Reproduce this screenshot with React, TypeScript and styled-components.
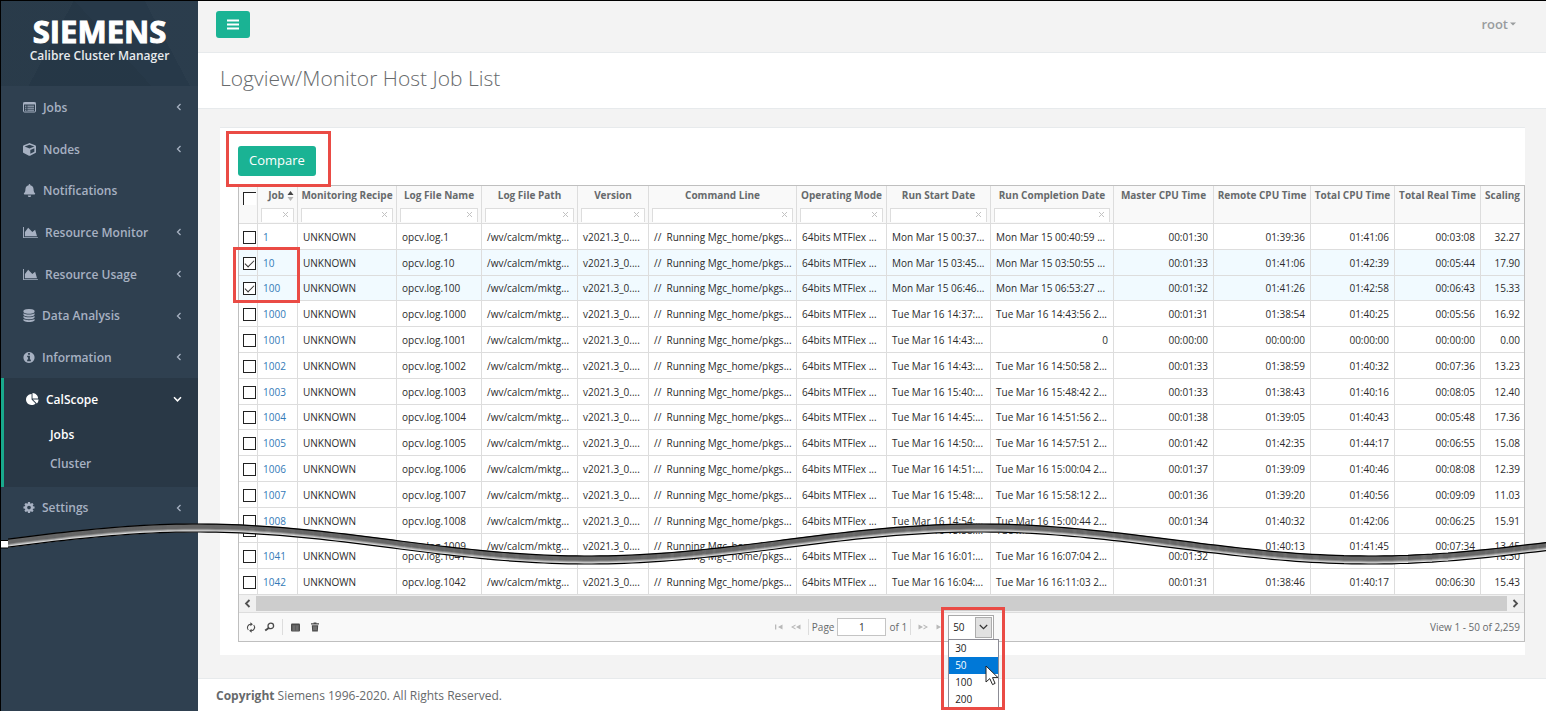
import React from "react";
import styled, { createGlobalStyle, css } from "styled-components";
import { FaBell, FaCube } from "react-icons/fa";

const GlobalStyle = createGlobalStyle`
  *, *::before, *::after { box-sizing: border-box; }
  body {
    margin: 0;
    font-family: "Open Sans", "Noto Sans", sans-serif;
    font-size: 12px;
    color: #676a6c;
    background: #f3f3f4;
  }
  button, input, select { font-family: inherit; }
`;

/* ---------- tear line geometry, shared by the drawing and the clip ---------- */

const VIEW_WIDTH = 1546;
const TEAR_THICKNESS = 8;
const tearY = (x: number) => 540 - 16 * Math.cos(((x - 197) / 391) * Math.PI);

const tearLine = (dy: number) => {
  const points: string[] = [];
  for (let x = 8; x <= VIEW_WIDTH + 8; x += 8) points.push(`${x},${(tearY(x) + dy - 520).toFixed(1)}`);
  return points.join(" ");
};

const lowerClip = () => {
  const left = 239;
  const width = 1285;
  const points: string[] = [];
  for (let i = 0; i <= 80; i++) {
    const x = left + (width * i) / 80;
    points.push(`${((i / 80) * 100).toFixed(2)}% ${(tearY(x) + TEAR_THICKNESS - 517).toFixed(1)}px`);
  }
  return `polygon(${points.join(", ")}, 100% 100%, 0 100%)`;
};

/* ---------- frame ---------- */

const Page = styled.div`
  position: relative;
  display: flex;
  min-height: 100vh;
  border-top: 1px solid #000;
  border-left: 1px solid #000;
  overflow: hidden;
`;

const Sidebar = styled.nav`
  flex: 0 0 197px;
  background: #2f4050;
`;

const Brand = styled.div`
  display: flex;
  flex-direction: column;
  align-items: center;
  height: 85px;
  padding-top: 13px;
  color: #fff;
  background:
    linear-gradient(62deg, transparent 78%, rgba(255, 255, 255, 0.02) 78%),
    linear-gradient(118deg, rgba(255, 255, 255, 0.02) 30%, transparent 30%),
    linear-gradient(48deg, rgba(0, 0, 0, 0.04) 55%, transparent 55%),
    #273949;
`;

const BrandName = styled.span`
  font-size: 31px;
  font-weight: 700;
  line-height: 34px;
  -webkit-text-stroke: 1px #fff;
`;

const BrandProduct = styled.span`
  font-size: 12px;
  font-weight: 600;
  line-height: 16px;
  color: #e8ebee;
`;

const Menu = styled.ul`
  list-style: none;
  margin: 0;
  padding: 0;
`;

const MenuLink = styled.a<{ $active?: boolean }>`
  display: flex;
  align-items: center;
  gap: 7px;
  height: 42px;
  padding: 0 16px 0 22px;
  font-weight: 600;
  color: ${(p) => (p.$active ? "#fff" : "#a7b1c2")};
  text-decoration: none;
  svg { flex: none; }
  svg:last-child { margin-left: auto; }
`;

const MenuItem = styled.li<{ $active?: boolean }>`
  &:nth-child(3n) > ${MenuLink} { height: 41px; }
  ${(p) =>
    p.$active &&
    css`
      background: #293846;
      border-left: 3px solid #19aa8d;
      padding-bottom: 9px;
    `}
`;

const SubLink = styled.a<{ $active?: boolean }>`
  display: block;
  padding-left: 46px;
  font-weight: 600;
  line-height: 29px;
  color: ${(p) => (p.$active ? "#fff" : "#a7b1c2")};
  text-decoration: none;
`;

const Main = styled.div`
  flex: 1;
  min-width: 0;
  display: flex;
  flex-direction: column;
  background: #f3f3f3;
`;

const TopBar = styled.header`
  display: flex;
  align-items: center;
  justify-content: space-between;
  height: 52px;
  padding: 0 30px 4px 18px;
  border-bottom: 1px solid #e7eaec;
`;

const BarsButton = styled.button`
  display: flex;
  align-items: center;
  justify-content: center;
  width: 34px;
  height: 27px;
  padding: 0;
  border: 0;
  border-radius: 3px;
  background: #1ab394;
  color: #fff;
`;

const UserLink = styled.a`
  display: flex;
  align-items: center;
  gap: 2px;
  padding-bottom: 2px;
  font-size: 13px;
  font-weight: 600;
  color: #999c9e;
  text-decoration: none;
`;

const TitleBar = styled.div`
  height: 56px;
  padding: 8px 22px;
  background: #fff;
  border-bottom: 1px solid #e7eaec;
`;

const Title = styled.h1`
  margin: 0;
  font-size: 21px;
  font-weight: 300;
  line-height: 34px;
`;

const Content = styled.main`
  flex: 1;
  padding: 18px 21px 23px 22px;
`;

const Panel = styled.section`
  padding: 18px 0 13px 18px;
  background: #fff;
  border-top: 1px solid #e7eaec;
`;

const PageFooter = styled.footer`
  height: 33px;
  padding-left: 18px;
  line-height: 33px;
  background: #fff;
  border-top: 1px solid #e7eaec;
`;

/* ---------- call-outs ---------- */

const Callout = styled.span<{ $inset: string }>`
  position: absolute;
  inset: ${(p) => p.$inset};
  z-index: 5;
  border: 3px solid #ea4b45;
  pointer-events: none;
`;

const CompareSlot = styled.div`
  position: relative;
  width: fit-content;
  margin-bottom: 9px;
`;

const CompareButton = styled.button`
  display: block;
  height: 30px;
  padding: 0 11px 2px;
  border: 0;
  border-radius: 3px;
  background: #1ab394;
  color: #fff;
  font-size: 13px;
`;

/* ---------- job grid ---------- */

const GridFrame = styled.div`
  border: 1px solid #bfbfbf;
  background: #fff;
`;

const GridTable = styled.table`
  width: 100%;
  table-layout: fixed;
  border-collapse: separate;
  border-spacing: 0;
  background: #fff;
  font-size: 10px;
  line-height: 14px;
`;

/* rows average a little under 26px, so every fifth one is a pixel shorter */
const UpperTable = styled(GridTable)`
  tbody tr:nth-child(5n + 3) td { height: 25px; }
`;

const LowerTable = styled(GridTable)`
  position: relative;
  margin-top: -42px;
  clip-path: ${lowerClip()};
`;

const HeadCell = styled.th`
  height: 38px;
  padding: 2px 3px 0;
  vertical-align: top;
  text-align: center;
  white-space: nowrap;
  font-weight: 700;
  background: #f9f9f9;
  border-right: 1px solid #ddd;
  border-bottom: 1px solid #ddd;
  &:last-child { border-right: 0; }
`;

const HeadLabel = styled.div<{ $sorted?: boolean }>`
  display: flex;
  justify-content: ${(p) => (p.$sorted ? "flex-end" : "center")};
  align-items: center;
  gap: 3px;
  line-height: 15px;
`;

const FilterBox = styled.div`
  display: flex;
  align-items: center;
  height: 14px;
  margin-top: 5px;
  border: 1px solid #ddd;
  border-bottom: 0;
  background: #fff;
`;

const FilterInput = styled.input`
  flex: 1;
  min-width: 0;
  width: 0;
  height: 12px;
  padding: 0 2px;
  border: 0;
  font-size: 10px;
  background: transparent;
`;

const ClearButton = styled.button`
  display: flex;
  padding: 0 5px 2px;
  border: 0;
  background: none;
  color: #c2c2c2;
`;

const Row = styled.tr<{ $selected?: boolean }>`
  background: ${(p) => (p.$selected ? "#f1faff" : "#fff")};
`;

const Cell = styled.td<{ $right?: boolean }>`
  height: 26px;
  padding: 0 5px;
  overflow: hidden;
  white-space: pre;
  color: #2b2b2b;
  text-align: ${(p) => (p.$right ? "right" : "left")};
  border-right: 1px solid #ddd;
  border-bottom: 1px solid #ddd;
  &:last-child { border-right: 0; padding-right: 4px; }
`;

const CheckCell = styled(Cell)`
  padding: 1px 0 0 4px;
`;

const JobLink = styled.a`
  color: #337ab7;
  text-decoration: none;
`;

const Check = styled.input`
  display: block;
  appearance: none;
  width: 13px;
  height: 13px;
  margin: 0;
  border: 1px solid #222;
  background: #fff;
  &:checked::after {
    content: "";
    display: block;
    width: 9px;
    height: 5px;
    margin: 2px 1px;
    border: solid #333;
    border-width: 0 0 1px 1px;
    transform: rotate(-45deg);
  }
`;

const HeadCheck = styled(Check)`
  margin: 4px 0 0 1px;
  border-width: 1px 0 0 1px;
`;

const Rows = styled.div`
  position: relative;
`;

const ScrollTrack = styled.div`
  display: flex;
  height: 18px;
  padding: 1px 0;
  background: #f0f0f0;
  border-bottom: 1px solid #ddd;
`;

const ScrollArrow = styled.button`
  display: flex;
  align-items: center;
  justify-content: center;
  width: 17px;
  padding: 0;
  border: 0;
  background: none;
  color: #505050;
`;

const ScrollThumb = styled.div`
  flex: 1;
  height: 15px;
  background: #cdcdcd;
`;

const Pager = styled.div`
  display: grid;
  grid-template-columns: 1fr auto 1fr;
  align-items: center;
  height: 28px;
  padding: 0 4px 0 6px;
  background: #f9f9f9;
  font-size: 10px;
`;

const PagerGroup = styled.div<{ $end?: boolean }>`
  display: flex;
  align-items: center;
  justify-content: ${(p) => (p.$end ? "flex-end" : "flex-start")};
`;

const ToolButton = styled.button<{ $muted?: boolean }>`
  display: flex;
  align-items: center;
  justify-content: center;
  width: ${(p) => (p.$muted ? 17 : 19)}px;
  height: 18px;
  padding: 0;
  border: 0;
  background: none;
  color: ${(p) => (p.$muted ? "#b9b9b9" : "#4a4a4a")};
`;

const ToolSet = styled.div`
  display: flex;
  margin-left: -4px;
  & + & { margin-left: 0; }
`;

const Divider = styled.span`
  width: 1px;
  height: 16px;
  margin: 0 3px;
  background: #ddd;
`;

const PageLabel = styled.label`
  display: flex;
  align-items: center;
  gap: 3px;
`;

const PageInput = styled.input`
  width: 49px;
  height: 18px;
  padding: 0;
  border: 1px solid #c4c4c4;
  background: #fff;
  text-align: center;
  font-size: 10px;
  color: #333;
`;

const SizeSlot = styled.div`
  position: relative;
  z-index: 3;
`;

const SizeField = styled.div`
  display: flex;
  width: 46px;
  height: 25px;
  padding: 1px;
  border: 1px solid #a9a9a9;
  background: #fff;
`;

const SizeSelect = styled.select`
  flex: 1;
  min-width: 0;
  appearance: none;
  padding: 0 0 0 3px;
  border: 0;
  background: #fff;
  font-size: 10px;
  color: #222;
`;

const SizeArrow = styled.span`
  display: flex;
  align-items: center;
  justify-content: center;
  width: 17px;
  border: 1px solid #adadad;
  background: #e1e1e1;
  color: #333;
`;

const SizeMenu = styled.ul`
  position: absolute;
  top: 24px;
  left: 0;
  width: 51px;
  margin: 0;
  padding: 0;
  list-style: none;
  border: 1px solid #8c8c95;
  background: #fff;
`;

const SizeOption = styled.li<{ $active?: boolean }>`
  padding-left: 6px;
  line-height: 17px;
  color: ${(p) => (p.$active ? "#fff" : "#222")};
  background: ${(p) => (p.$active ? "#0078d7" : "#fff")};
`;

const Pointer = styled.svg`
  position: absolute;
  top: 50px;
  left: 37px;
  z-index: 6;
`;

const Tear = styled.svg`
  position: absolute;
  top: 519px;
  left: -1px;
  width: calc(100% + 1px);
  height: 50px;
  z-index: 4;
  pointer-events: none;
`;

/* ---------- icons ---------- */

const Glyph = ({ box, width, d }: { box: string; width: number; d: string }) => (
  <svg width={width} height={13} viewBox={box} fill="currentColor" aria-hidden="true">
    <path d={d} />
  </svg>
);

const ListAltIcon = () => (
  <svg width="13" height="13" viewBox="0 0 13 13" fill="none" stroke="currentColor" aria-hidden="true">
    <rect x="0.5" y="1.5" width="12" height="9.5" rx="0.8" />
    <path d="M0.5 2.5h12" strokeWidth="2" />
    <path d="M2 5.2h1.4M4.4 5.2h6.6M2 7.2h1.4M4.4 7.2h6.6M2 9.2h1.4M4.4 9.2h6.6" />
  </svg>
);

const AreaIcon = () => (
  <Glyph
    box="0 0 2048 1792"
    width={15}
    d="M2048 1536v128h-2048v-1536h128v1408h1920zm-384-1024l256 896h-1664v-576l448-576 576 576z"
  />
);

const DatabaseIcon = () => (
  <Glyph
    box="128 0 1536 1792"
    width={12}
    d="M896 768q237 0 443-43t325-127v170q0 69-103 128t-280 93.5-385 34.5-385-34.5-280-93.5-103-128v-170q119 84 325 127t443 43zm0 768q237 0 443-43t325-127v170q0 69-103 128t-280 93.5-385 34.5-385-34.5-280-93.5-103-128v-170q119 84 325 127t443 43zm0-384q237 0 443-43t325-127v170q0 69-103 128t-280 93.5-385 34.5-385-34.5-280-93.5-103-128v-170q119 84 325 127t443 43zm0-1152q208 0 385 34.5t280 93.5 103 128v128q0 69-103 128t-280 93.5-385 34.5-385-34.5-280-93.5-103-128v-128q0-69 103-128t280-93.5 385-34.5z"
  />
);

const InfoIcon = () => (
  <Glyph
    box="128 0 1536 1792"
    width={12}
    d="M1152 1376v-160q0-14-9-23t-23-9h-96v-512q0-14-9-23t-23-9h-320q-14 0-23 9t-9 23v160q0 14 9 23t23 9h96v320h-96q-14 0-23 9t-9 23v160q0 14 9 23t23 9h448q14 0 23-9t9-23zm-128-896v-160q0-14-9-23t-23-9h-192q-14 0-23 9t-9 23v160q0 14 9 23t23 9h192q14 0 23-9t9-23zm640 416q0 209-103 385.5t-279.5 279.5-385.5 103-385.5-103-279.5-279.5-103-385.5 103-385.5 279.5-279.5 385.5-103 385.5 103 279.5 279.5 103 385.5z"
  />
);

const PieIcon = () => (
  <Glyph
    box="0 0 1792 1792"
    width={13}
    d="M768 890l546 546q-106 108-247.5 168t-298.5 60q-209 0-385.5-103t-279.5-279.5-103-385.5 103-385.5 279.5-279.5 385.5-103v762zm187 6h773q0 157-60 298.5t-168 247.5zm709-128h-768v-768q209 0 385.5 103t279.5 279.5 103 385.5z"
  />
);

const CogIcon = () => (
  <Glyph
    box="128 0 1536 1792"
    width={12}
    d="M1152 896q0-106-75-181t-181-75-181 75-75 181 75 181 181 75 181-75 75-181zm512-109v222q0 12-8 23t-20 13l-185 28q-19 54-39 91 35 50 107 138 10 12 10 25t-9 23q-27 37-99 108t-94 71q-12 0-26-9l-138-108q-44 23-91 38-16 136-29 186-7 28-36 28h-222q-14 0-24.5-8.5t-11.5-21.5l-28-184q-49-16-90-37l-141 107q-10 9-25 9-14 0-25-11-126-114-165-168-7-10-7-23 0-12 8-23 15-21 51-66.5t54-70.5q-27-50-41-99l-183-27q-13-2-21-12.5t-8-23.5v-222q0-12 8-23t19-13l186-28q14-46 39-92-40-57-107-138-10-12-10-24 0-10 9-23 26-36 98.5-107.5t94.5-71.5q13 0 26 10l138 107q44-23 91-38 16-136 29-186 7-28 36-28h222q14 0 24.5 8.5t11.5 21.5l28 184q49 16 90 37l142-107q9-9 24-9 13 0 25 10 129 119 165 170 7 8 7 22 0 12-8 23-15 21-51 66.5t-54 70.5q26 50 41 98l183 28q13 2 21 12.5t8 23.5z"
  />
);

const Stroke = ({ w, h, d, sw = 1.3 }: { w: number; h: number; d: string; sw?: number }) => (
  <svg width={w} height={h} viewBox={`0 0 ${w} ${h}`} fill="none" stroke="currentColor" strokeWidth={sw} aria-hidden="true">
    <path d={d} />
  </svg>
);

const AngleLeft = () => <Stroke w={6} h={8} d="M4.5 1 1.5 4l3 3" />;
const AngleDown = () => <Stroke w={9} h={8} d="M1 2.2 4.5 5.8 8 2.2" sw={1.5} />;

const SortIcon = () => (
  <svg width="7" height="10" viewBox="0 0 7 10" aria-hidden="true">
    <path d="M0.5 4 3.5 0 6.5 4z" fill="#444" />
    <path d="M0.5 6 3.5 10 6.5 6z" fill="#b5b5b5" />
  </svg>
);

const RefreshIcon = () => (
  <svg width="10" height="11" viewBox="0 0 10 11" fill="none" stroke="currentColor" strokeWidth="1.1" aria-hidden="true">
    <path d="M2.3 8A3.4 3.4 0 0 1 5 2.3M7.7 3A3.4 3.4 0 0 1 5 8.7" />
    <path d="M4.4 0.3 6.9 2.3 4.4 4.3zM5.6 6.7 3.1 8.7 5.6 10.7z" fill="currentColor" stroke="none" />
  </svg>
);

const SearchIcon = () => (
  <svg width="11" height="10" viewBox="0 0 11 10" fill="none" stroke="currentColor" aria-hidden="true">
    <circle cx="6.8" cy="3.9" r="2.8" strokeWidth="1.3" />
    <path d="M4.7 6 1.2 8.6" strokeWidth="1.9" />
  </svg>
);

const ColumnsIcon = () => (
  <svg width="9" height="9" viewBox="0 0 9 9" aria-hidden="true">
    <rect x="0" y="0.5" width="9" height="8" rx="1" fill="currentColor" />
    <path d="M1 3h7M1 5h7M1 7h7M3 2.5v5M6 2.5v5" stroke="#9a9a9a" strokeWidth="0.5" />
  </svg>
);

const TrashIcon = () => (
  <svg width="8" height="10" viewBox="0 0 8 10" aria-hidden="true">
    <path d="M0 1.3h2.6V.4h2.8v.9H8v1.2H0zM0.8 3.2h6.4L6.8 9.6H1.2z" fill="currentColor" />
    <path d="M2.8 4.3v4M4 4.3v4M5.2 4.3v4" stroke="#b5b5b5" strokeWidth="0.5" />
  </svg>
);

const Solid = ({ d }: { d: string }) => (
  <svg width="10" height="6" viewBox="0 0 10 6" fill="currentColor" aria-hidden="true">
    <path d={d} />
  </svg>
);

/* ---------- data ---------- */

const menu = [
  { label: "Jobs", icon: <ListAltIcon />, arrow: true },
  { label: "Nodes", icon: <FaCube size={13} />, arrow: true },
  { label: "Notifications", icon: <FaBell size={13} />, arrow: false },
  { label: "Resource Monitor", icon: <AreaIcon />, arrow: true },
  { label: "Resource Usage", icon: <AreaIcon />, arrow: true },
  { label: "Data Analysis", icon: <DatabaseIcon />, arrow: true },
  { label: "Information", icon: <InfoIcon />, arrow: true },
];

const columns = [
  { label: "Job", width: 40, filter: true },
  { label: "Monitoring Recipe", width: 99, filter: true },
  { label: "Log File Name", width: 85, filter: true },
  { label: "Log File Path", width: 96, filter: true },
  { label: "Version", width: 71, filter: true },
  { label: "Command Line", width: 148, filter: true },
  { label: "Operating Mode", width: 90, filter: true },
  { label: "Run Start Date", width: 104, filter: true },
  { label: "Run Completion Date", width: 123, filter: true },
  { label: "Master CPU Time", width: 100, filter: false },
  { label: "Remote CPU Time", width: 97, filter: false },
  { label: "Total CPU Time", width: 84, filter: false },
  { label: "Total Real Time", width: 86, filter: false },
  { label: "Scaling", width: 43, filter: false },
];

type Job = [id: string, start: string, end: string, master: string, remote: string, total: string, real: string, scaling: string];

const upperJobs: Job[] = [
  ["1", "Mon Mar 15 00:37...", "Mon Mar 15 00:40:59 ...", "00:01:30", "01:39:36", "01:41:06", "00:03:08", "32.27"],
  ["10", "Mon Mar 15 03:45...", "Mon Mar 15 03:50:55 ...", "00:01:33", "01:41:06", "01:42:39", "00:05:44", "17.90"],
  ["100", "Mon Mar 15 06:46...", "Mon Mar 15 06:53:27 ...", "00:01:32", "01:41:26", "01:42:58", "00:06:43", "15.33"],
  ["1000", "Tue Mar 16 14:37:...", "Tue Mar 16 14:43:56 2...", "00:01:31", "01:38:54", "01:40:25", "00:05:56", "16.92"],
  ["1001", "Tue Mar 16 14:43:...", "0", "00:00:00", "00:00:00", "00:00:00", "00:00:00", "0.00"],
  ["1002", "Tue Mar 16 14:43:...", "Tue Mar 16 14:50:58 2...", "00:01:33", "01:38:59", "01:40:32", "00:07:36", "13.23"],
  ["1003", "Tue Mar 16 15:40:...", "Tue Mar 16 15:48:42 2...", "00:01:33", "01:38:43", "01:40:16", "00:08:05", "12.40"],
  ["1004", "Tue Mar 16 14:45:...", "Tue Mar 16 14:51:56 2...", "00:01:38", "01:39:05", "01:40:43", "00:05:48", "17.36"],
  ["1005", "Tue Mar 16 14:50:...", "Tue Mar 16 14:57:51 2...", "00:01:42", "01:42:35", "01:44:17", "00:06:55", "15.08"],
  ["1006", "Tue Mar 16 14:51:...", "Tue Mar 16 15:00:04 2...", "00:01:37", "01:39:09", "01:40:46", "00:08:08", "12.39"],
  ["1007", "Tue Mar 16 15:48:...", "Tue Mar 16 15:58:12 2...", "00:01:36", "01:39:20", "01:40:56", "00:09:09", "11.03"],
  ["1008", "Tue Mar 16 14:54:...", "Tue Mar 16 15:00:44 2...", "00:01:34", "01:40:32", "01:42:06", "00:06:25", "15.91"],
  ["1009", "", "", "", "01:40:13", "01:41:45", "00:07:34", "13.45"],
];

/* the first row below the tear shows only its date cells */
const lowerJobs: Job[] = [
  ["", "Tue Mar 16 15:58:...", "Tue Mar 16 16:04:31 2...", "", "", "", "", ""],
  ["1041", "Tue Mar 16 16:01:...", "Tue Mar 16 16:07:04 2...", "00:01:32", "", "", "", "18.30"],
  ["1042", "Tue Mar 16 16:04:...", "Tue Mar 16 16:11:03 2...", "00:01:31", "01:38:46", "01:40:17", "00:06:30", "15.43"],
];

const selected = new Set(["10", "100"]);

const Columns = () => (
  <colgroup>
    <col style={{ width: 19 }} />
    {columns.map((c) => (
      <col key={c.label} style={{ width: c.width }} />
    ))}
  </colgroup>
);

const JobRow = ({ job }: { job: Job }) => {
  const [id, start, end, ...times] = job;
  return (
    <Row $selected={selected.has(id)}>
      <CheckCell>
        <Check type="checkbox" aria-label={`Select job ${id}`} defaultChecked={selected.has(id)} />
      </CheckCell>
      <Cell>{id && <JobLink href="#">{id}</JobLink>}</Cell>
      <Cell>{id && "UNKNOWN"}</Cell>
      <Cell>{id && `opcv.log.${id}`}</Cell>
      <Cell>{id && "/wv/calcm/mktg..."}</Cell>
      <Cell>{id && "v2021.3_0...."}</Cell>
      <Cell>{id && "//  Running Mgc_home/pkgs..."}</Cell>
      <Cell>{id && "64bits MTFlex ..."}</Cell>
      <Cell>{start}</Cell>
      <Cell $right={end === "0"}>{end}</Cell>
      {times.map((t, i) => (
        <Cell key={i} $right>{t}</Cell>
      ))}
    </Row>
  );
};

const tearShades = ["#666", "#666", "#666", "#666", "#666", "#8c8c8c", "#bababa", "#e4e4e4"];

export default function App() {
  return (
    <>
      <GlobalStyle />
      <Page>
        <Sidebar>
          <Brand>
            <BrandName>SIEMENS</BrandName>
            <BrandProduct>Calibre Cluster Manager</BrandProduct>
          </Brand>
          <Menu>
            {menu.map((m) => (
              <MenuItem key={m.label}>
                <MenuLink href="#">
                  {m.icon}
                  <span>{m.label}</span>
                  {m.arrow && <AngleLeft />}
                </MenuLink>
              </MenuItem>
            ))}
            <MenuItem $active>
              <MenuLink href="#" $active>
                <PieIcon />
                <span>CalScope</span>
                <AngleDown />
              </MenuLink>
              <Menu>
                <li><SubLink href="#" $active>Jobs</SubLink></li>
                <li><SubLink href="#">Cluster</SubLink></li>
              </Menu>
            </MenuItem>
            <MenuItem>
              <MenuLink href="#">
                <CogIcon />
                <span>Settings</span>
                <AngleLeft />
              </MenuLink>
            </MenuItem>
          </Menu>
        </Sidebar>

        <Main>
          <TopBar>
            <BarsButton aria-label="Toggle menu">
              <Stroke w={12} h={11} d="M0 1.5h12M0 5.5h12M0 9.5h12" sw={2} />
            </BarsButton>
            <UserLink href="#">
              root
              <svg width="6" height="4" viewBox="0 0 6 4" fill="currentColor" aria-hidden="true">
                <path d="M0 0.5h6L3 3.5z" />
              </svg>
            </UserLink>
          </TopBar>

          <TitleBar>
            <Title>Logview/Monitor Host Job List</Title>
          </TitleBar>

          <Content>
            <Panel>
              <CompareSlot>
                <CompareButton>Compare</CompareButton>
                <Callout $inset="-15px -15px -11px -12px" />
              </CompareSlot>

              <GridFrame>
                <Rows>
                  <UpperTable>
                    <Columns />
                    <thead>
                      <tr>
                        <HeadCell>
                          <HeadCheck type="checkbox" aria-label="Select all jobs" />
                        </HeadCell>
                        {columns.map((c) => (
                          <HeadCell key={c.label} scope="col">
                            <HeadLabel $sorted={c.label === "Job"}>
                              {c.label}
                              {c.label === "Job" && <SortIcon />}
                            </HeadLabel>
                            {c.filter && (
                              <FilterBox>
                                <FilterInput type="text" aria-label={`Filter ${c.label}`} />
                                <ClearButton aria-label={`Clear ${c.label} filter`}>
                                  <Stroke w={5} h={5} d="M0 0l5 5M5 0 0 5" sw={1} />
                                </ClearButton>
                              </FilterBox>
                            )}
                          </HeadCell>
                        ))}
                      </tr>
                    </thead>
                    <tbody>
                      {upperJobs.map((job) => <JobRow key={job[0]} job={job} />)}
                    </tbody>
                  </UpperTable>
                  <LowerTable>
                    <Columns />
                    <tbody>
                      {lowerJobs.map((job) => <JobRow key={job[0]} job={job} />)}
                    </tbody>
                  </LowerTable>
                  <Callout $inset="61px auto auto -6px" style={{ width: 67, height: 56 }} />
                </Rows>

                <ScrollTrack>
                  <ScrollArrow aria-label="Scroll left"><Stroke w={7} h={9} d="M5.5 1 2 4.5 5.5 8" sw={1.8} /></ScrollArrow>
                  <ScrollThumb />
                  <ScrollArrow aria-label="Scroll right"><Stroke w={7} h={9} d="M1.5 1 5 4.5 1.5 8" sw={1.8} /></ScrollArrow>
                </ScrollTrack>

                <Pager>
                  <PagerGroup>
                    <ToolSet>
                      <ToolButton aria-label="Reload"><RefreshIcon /></ToolButton>
                      <ToolButton aria-label="Search"><SearchIcon /></ToolButton>
                    </ToolSet>
                    <Divider />
                    <ToolButton aria-label="Choose columns"><ColumnsIcon /></ToolButton>
                    <ToolButton aria-label="Delete"><TrashIcon /></ToolButton>
                  </PagerGroup>
                  <PagerGroup>
                    <ToolButton $muted aria-label="First page"><Solid d="M1 0.5h1.3v5H1zM8.5 0.5v5L4 3z" /></ToolButton>
                    <ToolButton $muted aria-label="Previous page"><Solid d="M4.5 0.5v1.3L2 3l2.5 1.2v1.3L0 3zM9.5 0.5v5L5 3z" /></ToolButton>
                    <Divider />
                    <PageLabel>
                      Page
                      <PageInput type="text" defaultValue="1" />
                      of 1
                    </PageLabel>
                    <Divider />
                    <ToolButton $muted aria-label="Next page"><Solid d="M5.5 0.5v1.3L8 3 5.5 4.2v1.3L10 3zM0.5 0.5v5L5 3z" /></ToolButton>
                    <ToolButton $muted aria-label="Last page"><Solid d="M9 0.5H7.7v5H9zM1.5 0.5v5L6 3z" /></ToolButton>
                    <SizeSlot>
                      <SizeField>
                        <SizeSelect aria-label="Rows per page" defaultValue="50">
                          <option>30</option>
                          <option>50</option>
                          <option>100</option>
                          <option>200</option>
                        </SizeSelect>
                        <SizeArrow><Stroke w={9} h={6} d="M0.8 1 4.5 4.7 8.2 1" sw={1.2} /></SizeArrow>
                      </SizeField>
                      <SizeMenu role="listbox" aria-label="Rows per page options">
                        {["30", "50", "100", "200"].map((n) => (
                          <SizeOption key={n} role="option" aria-selected={n === "50"} $active={n === "50"}>{n}</SizeOption>
                        ))}
                      </SizeMenu>
                      <Callout $inset="-8px -11px -70px -7px" />
                      <Pointer width="14" height="21" viewBox="0 0 14 21" aria-hidden="true">
                        <path d="M1 1v16l3.8-3.4 2.7 6 2.6-1.2-2.6-5.8H13z" fill="#fff" stroke="#222" strokeWidth="1" />
                      </Pointer>
                    </SizeSlot>
                  </PagerGroup>
                  <PagerGroup $end>View 1 - 50 of 2,259</PagerGroup>
                </Pager>
              </GridFrame>
            </Panel>
          </Content>

          <PageFooter>
            <strong>Copyright</strong> Siemens 1996-2020. All Rights Reserved.
          </PageFooter>
        </Main>

        <Tear viewBox="0 0 1546 50" preserveAspectRatio="none" aria-hidden="true">
          <g fill="none">
            {tearShades.map((shade, i) => (
              <polyline key={i} points={tearLine(i + 0.5)} stroke={shade} strokeWidth="1.6" />
            ))}
            <polyline points={tearLine(0)} stroke="#000" strokeWidth="1.2" />
            <polyline points={tearLine(TEAR_THICKNESS)} stroke="#000" strokeWidth="1.2" />
            <path d="M0 20.5h8v7.500H0z" fill="#fff" />
            <path d="M0 20.5h8M0 28h8" stroke="#000" />
          </g>
        </Tear>
      </Page>
    </>
  );
}
